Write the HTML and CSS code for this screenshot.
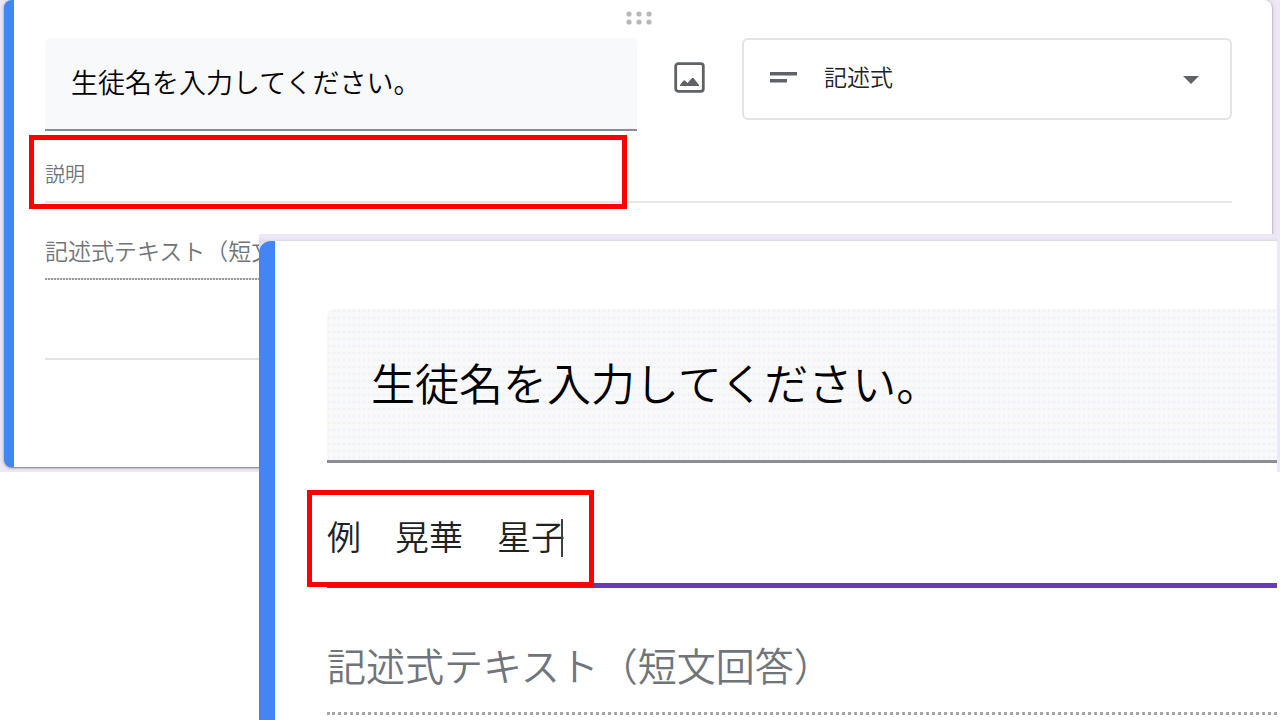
FILE: index.html
```html
<!DOCTYPE html>
<html lang="ja">
<head>
<meta charset="utf-8">
<meta name="viewport" content="width=device-width, initial-scale=1">
<title>フォームの編集</title>
<link rel="stylesheet" href="styles.css">
</head>
<body>
<main class="stage">
  <section class="backdrop" aria-label="質問の編集">
    <div class="card">
      <svg class="drag-handle" viewBox="0 0 26 14" aria-hidden="true">
        <g fill="#b8b8b8"><circle cx="3" cy="3" r="2.6"/><circle cx="13" cy="3" r="2.6"/><circle cx="23" cy="3" r="2.6"/><circle cx="3" cy="11" r="2.6"/><circle cx="13" cy="11" r="2.6"/><circle cx="23" cy="11" r="2.6"/></g>
      </svg>
      <div class="question-row">
        <input class="title" type="text" aria-label="質問" value="生徒名を入力してください。">
        <button class="image-button" type="button" aria-label="画像を追加">
          <svg viewBox="0 0 31 31" aria-hidden="true">
            <rect x="1.700" y="1.700" width="27.600" height="27.600" rx="2.500" fill="none" stroke="#5f6368" stroke-width="2.800"/>
            <path d="M6 24v-1l3.500-4.500h1.500l2.500 2.500 4.500-5h1.500L25 23v1z" fill="#5f6368"/>
          </svg>
        </button>
        <div class="type">
          <svg class="type-icon" viewBox="0 0 27 11" aria-hidden="true"><path d="M0 0h27v3.500H0zM0 7h17v3.500H0z" fill="#5f6368"/></svg>
          <select class="type-select" aria-label="質問の形式"><option>記述式</option></select>
          <svg class="type-arrow" viewBox="0 0 16 8" aria-hidden="true"><path d="M0 0h16L8 8z" fill="#5f6368"/></svg>
        </div>
      </div>
      <div class="description">
        <input class="description-input" type="text" aria-label="説明" placeholder="説明">
        <span class="highlight highlight-description"></span>
      </div>
      <div class="answer">記述式テキスト（短文回答）</div>
      <hr class="divider">
    </div>
  </section>

  <section class="closeup" aria-label="説明の入力例">
    <div class="closeup-card">
      <input class="title title-large" type="text" aria-label="質問" value="生徒名を入力してください。">
      <div class="description description-large">
        <input class="description-input description-input-large" type="text" aria-label="説明" value="例　晃華　星子">
        <span class="caret"></span>
        <span class="highlight highlight-example"></span>
      </div>
      <div class="answer-large">記述式テキスト（短文回答）</div>
    </div>
  </section>
</main>
</body>
</html>
```

FILE: styles.css
```css
* {
  box-sizing: border-box;
}

body {
  margin: 0;
  background: #fff;
  color: #202124;
  font-family: "Noto Sans CJK JP", sans-serif;
  font-weight: 350;
}

input,
select,
button {
  display: block;
  margin: 0;
  padding: 0;
  border: 0;
  border-radius: 0;
  background: transparent;
  color: inherit;
  font: inherit;
  outline: 0;
}

.stage {
  position: relative;
  min-height: 100vh;
  overflow: hidden;
}

.backdrop {
  padding: 0 8px 5px 4px;
  background: #ede7f6;
}

.card {
  padding: 11px 40px 107px 31px;
  border-left: 10px solid #4285f4;
  border-radius: 8px;
  background: #fff;
  box-shadow: 0 1px 2px 0 rgba(60, 64, 67, 0.6), 0 0 4px 1px rgba(60, 64, 67, 0.12);
}

.drag-handle {
  display: block;
  width: 26px;
  height: 14px;
  margin: 0 auto 13px;
}

.question-row {
  display: grid;
  grid-template-columns: minmax(0, 592fr) 31px minmax(0, 490fr);
  gap: 37px;
  align-items: start;
}

.title {
  width: 100%;
  height: 93px;
  padding: 0 26px 4px;
  border-bottom: 2px solid #898e94;
  border-radius: 5px 5px 0 0;
  background: #f8f9fa;
  color: #000;
  font-size: 27px;
}

.image-button {
  width: 31px;
  height: 31px;
  margin-top: 24px;
}

.image-button svg {
  display: block;
}

.type {
  position: relative;
}

.type-select {
  width: 100%;
  height: 82px;
  padding: 0 80px 6px;
  border: 2px solid #e2e3e7;
  border-radius: 6px;
  appearance: none;
  font-size: 23px;
}

.type-icon,
.type-arrow {
  position: absolute;
  pointer-events: none;
}

.type-icon {
  top: 34px;
  left: 28px;
  width: 27px;
}

.type-arrow {
  top: 38px;
  right: 33px;
  width: 16px;
}

.description {
  position: relative;
  border-bottom: 2px solid #e6e6e8;
}

.description-input {
  width: 100%;
  height: 70px;
  padding-top: 14px;
  font-size: 20px;
}

.description-input::placeholder {
  color: #70757a;
  opacity: 1;
}

.answer {
  padding: 30px 0 12px;
  background: repeating-linear-gradient(90deg, #999 0 2px, #e8e8e8 2px 3px) bottom left / 50% 2px no-repeat;
  color: #70757a;
  font-size: 23px;
  line-height: 35px;
}

.divider {
  height: 2px;
  margin: 78px 0 0;
  border: 0;
  background: #e2e3e9;
}

.highlight {
  position: absolute;
  border: 5px solid #f00;
  pointer-events: none;
}

.highlight-description {
  top: 4px;
  bottom: -8px;
  left: -16px;
  width: 598px;
}

/* Magnified panel laid over the lower right of the form */
.closeup {
  position: absolute;
  top: 234px;
  right: 3px;
  bottom: 0;
  left: 259px;
  overflow: hidden;
  padding-top: 7px;
  background: linear-gradient(#ede7f6 0 4px, #dcdae3 7px, #ede7f6 20px);
}

.closeup-card {
  min-height: 100%;
  padding: 68px 0 0 52px;
  border-left: 16px solid #4285f4;
  border-top-left-radius: 12px;
  background: #fff;
}

.title-large {
  height: 154px;
  padding: 0 44px 6px;
  border-bottom-width: 3px;
  border-radius: 8px 0 0;
  background:
    radial-gradient(circle at 2px 2px, #f4f0fa 1px, transparent 2px) 0 0 / 5px 7px,
    #f8faf9;
  font-size: 44px;
}

.description-large {
  border-bottom: 5px solid #673ab7;
}

.description-input-large {
  height: 120px;
  padding-top: 24px;
  font-size: 34px;
}

.caret {
  position: absolute;
  top: 56px;
  left: 234px;
  width: 2px;
  height: 38px;
  background: #3c4043;
}

.highlight-example {
  top: 27px;
  bottom: -4px;
  left: -20px;
  width: 287px;
}

.answer-large {
  padding: 48px 0 20px;
  border-bottom: 3px dotted #a5a5a5;
  color: #70757a;
  font-size: 39px;
  line-height: 56px;
}
```
